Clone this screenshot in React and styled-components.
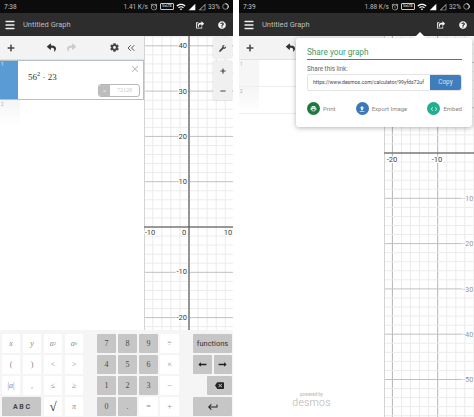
import React from "react";
import styled, { createGlobalStyle } from "styled-components";
import {
  FaWrench,
  FaCog,
  FaShareSquare,
  FaQuestionCircle,
  FaPlus,
  FaMinus,
  FaReply,
  FaLongArrowAltLeft,
  FaLongArrowAltRight,
} from "react-icons/fa";
import {
  MdBackspace,
  MdKeyboardReturn,
  MdPrint,
  MdFileUpload,
  MdCode,
  MdWifi,
  MdSignalCellular4Bar,
  MdSignalCellularNull,
  MdAccessAlarm,
} from "react-icons/md";
import { ChevronsLeft, X, Menu } from "lucide-react";

const GlobalStyle = createGlobalStyle`
  html, body {
    margin: 0;
    padding: 0;
    background: #fff;
  }
  body {
    font-family: Roboto, "Liberation Sans", sans-serif;
  }
`;

const MAJOR = 45.3;
const MINOR = MAJOR / 5;

const range = (start, end, step) => {
  const out = [];
  for (let v = start; v <= end; v += step) out.push(v);
  return out;
};

const Graph = ({ width, height, ox, oy, xLabels, yLabels, children }) => {
  const vert = range(-30, 30, 1).map((i) => ({ i, p: ox + i * MINOR })).filter((l) => l.p >= 0 && l.p <= width);
  const horiz = range(-30, 30, 1).map((i) => ({ i, p: oy + i * MINOR })).filter((l) => l.p >= 0 && l.p <= height);
  return (
    <GraphArea $width={width}>
      <svg width={width} height={height} style={{ display: "block" }}>
        {vert.map(({ i, p }) => (
          <line key={i} x1={p} x2={p} y1={0} y2={height} stroke={i % 5 === 0 ? "#b4b4b4" : "#ebebeb"} strokeWidth="1" />
        ))}
        {horiz.map(({ i, p }) => (
          <line key={i} x1={0} x2={width} y1={p} y2={p} stroke={i % 5 === 0 ? "#c0c0c0" : "#ebebeb"} strokeWidth="1" />
        ))}
        <line x1={0.5} x2={0.5} y1={0} y2={height} stroke="#d4d4d4" strokeWidth="1" />
        <line x1={0} x2={width} y1={oy} y2={oy} stroke="#555" strokeWidth="1.2" />
        {ox <= width && <line x1={ox} x2={ox} y1={0} y2={height} stroke="#666" strokeWidth="1.2" />}
        {xLabels.map((l) => (
          <AxisLabel key={l.t} x={l.x} y={l.y} textAnchor="middle" $faint={l.faint}>
            {l.t}
          </AxisLabel>
        ))}
        {yLabels.map((l) => (
          <AxisLabel key={l.t} x={l.x} y={l.y} textAnchor={l.anchor || "end"} $faint={l.faint}>
            {l.t}
          </AxisLabel>
        ))}
      </svg>
      {children}
    </GraphArea>
  );
};

const BatteryRing = () => (
  <svg width="7" height="7" viewBox="0 0 10 10">
    <circle cx="5" cy="5" r="4" fill="none" stroke="#9a9a9a" strokeWidth="1.2" />
    <path d="M5 1a4 4 0 0 1 2.6 7" fill="none" stroke="#fff" strokeWidth="1.2" />
  </svg>
);

const StatusBar = ({ time, speed, battery }) => (
  <Status>
    <span>{time}</span>
    <StatusRight>
      <span>{speed}</span>
      <MdAccessAlarm size={8} />
      <Volte>VoLTE</Volte>
      <MdWifi size={10} color="#fff" />
      <MdSignalCellular4Bar size={8} color="#fff" />
      <MdSignalCellularNull size={8} />
      <span>{battery}</span>
      <BatteryRing />
    </StatusRight>
  </Status>
);

const TopBar = () => (
  <Header>
    <HeaderLeft>
      <Menu size={12} strokeWidth={2.6} color="#f0f0f0" />
      <HeaderTitle>Untitled Graph</HeaderTitle>
    </HeaderLeft>
    <HeaderRight>
      <FaShareSquare size={8} />
      <FaQuestionCircle size={8} />
    </HeaderRight>
  </Header>
);

const Key = ({ dark, span, children }) => (
  <KeyCap $dark={dark} $span={span}>
    {children}
  </KeyCap>
);

const LEFT_X = [
  { t: "-10", x: 6, y: 199 },
  { t: "0", x: 40, y: 199 },
  { t: "10", x: 84, y: 199 },
];
const LEFT_Y = [
  { t: "40", x: 43, y: 12 },
  { t: "30", x: 43, y: 58 },
  { t: "20", x: 43, y: 103 },
  { t: "10", x: 43, y: 148 },
  { t: "-10", x: 43, y: 238 },
  { t: "-20", x: 43, y: 284 },
];
const RIGHT_X = [
  { t: "-20", x: 8, y: 126 },
  { t: "-10", x: 53, y: 126 },
];
const RIGHT_Y = [
  { t: "-10", x: 79, y: 165, anchor: "start", faint: true },
  { t: "-20", x: 79, y: 210, anchor: "start", faint: true },
  { t: "-30", x: 79, y: 256, anchor: "start", faint: true },
  { t: "-40", x: 79, y: 301, anchor: "start", faint: true },
  { t: "-50", x: 79, y: 346, anchor: "start", faint: true },
];

export default function App() {
  return (
    <Page>
      <GlobalStyle />
      <Phone $width={233}>
        <StatusBar time="7:38" speed="1.41 K/s" battery="33%" />
        <TopBar />
        <Body>
          <Panel>
            <Toolbar>
              <FaPlus size={8} color="#444" />
              <UndoGroup>
                <FaReply size={9} color="#333" />
                <RedoIcon size={9} color="#ccc" />
              </UndoGroup>
              <ToolbarEnd>
                <FaCog size={9} color="#444" />
                <ChevronsLeft size={12} color="#555" />
              </ToolbarEnd>
            </Toolbar>
            <ActiveRow>
              <RowTab>1</RowTab>
              <Formula>
                56<sup>2</sup> · 23
              </Formula>
              <CloseBtn>
                <X size={10} color="#bbb" strokeWidth={2.5} />
              </CloseBtn>
              <Answer>
                <AnswerEq>=</AnswerEq>
                <AnswerVal>72128</AnswerVal>
              </Answer>
            </ActiveRow>
            <EmptyRow>
              <Gutter $fade>
                <RowNum>2</RowNum>
              </Gutter>
            </EmptyRow>
          </Panel>
          <Graph width={89} height={294} ox={45} oy={191} xLabels={LEFT_X} yLabels={LEFT_Y}>
            <ToolStack>
              <ToolBox>
                <ToolCell $height={20}>
                  <FaWrench size={7} color="#444" />
                </ToolCell>
              </ToolBox>
              <ToolBox>
                <ToolCell $height={20}>
                  <FaPlus size={6} color="#444" />
                </ToolCell>
                <ToolCell $height={19}>
                  <FaMinus size={6} color="#444" />
                </ToolCell>
              </ToolBox>
            </ToolStack>
          </Graph>
        </Body>
        <Keypad>
          <KeyGroup $cols="repeat(4, 18px)" $gap={3}>
            <Key><i>x</i></Key>
            <Key><i>y</i></Key>
            <Key><i>a</i><sup>2</sup></Key>
            <Key><i>a</i><sup><i>b</i></sup></Key>
            <Key>(</Key>
            <Key>)</Key>
            <Key>&lt;</Key>
            <Key>&gt;</Key>
            <Key>|<i>a</i>|</Key>
            <Key>,</Key>
            <Key>≤</Key>
            <Key>≥</Key>
            <Key dark span={2}><AbcLabel>A B C</AbcLabel></Key>
            <Key><SqrtLabel>√</SqrtLabel></Key>
            <Key><i>π</i></Key>
          </KeyGroup>
          <KeyGroup $cols="repeat(4, 19px)" $gap={2}>
            <Key dark>7</Key>
            <Key dark>8</Key>
            <Key dark>9</Key>
            <Key>÷</Key>
            <Key dark>4</Key>
            <Key dark>5</Key>
            <Key dark>6</Key>
            <Key>×</Key>
            <Key dark>1</Key>
            <Key dark>2</Key>
            <Key dark>3</Key>
            <Key>−</Key>
            <Key dark>0</Key>
            <Key dark>.</Key>
            <Key>=</Key>
            <Key>+</Key>
          </KeyGroup>
          <KeyGroup $cols="repeat(6, 1fr)" $gap={2} $width={40}>
            <Key dark span={6}><FuncLabel>functions</FuncLabel></Key>
            <Key dark span={3}><FaLongArrowAltLeft size={9} color="#222" /></Key>
            <Key dark span={3}><FaLongArrowAltRight size={9} color="#222" /></Key>
            <KeySpacer />
            <Key dark span={4}><MdBackspace size={9} color="#222" /></Key>
            <Key dark span={6}><MdKeyboardReturn size={12} color="#222" /></Key>
          </KeyGroup>
        </Keypad>
      </Phone>
      <Phone $width={235}>
        <StatusBar time="7:39" speed="1.88 K/s" battery="32%" />
        <TopBar />
        <Body>
          <Panel>
            <Toolbar>
              <FaPlus size={8} color="#444" />
              <UndoGroup>
                <FaReply size={9} color="#333" />
              </UndoGroup>
            </Toolbar>
            <PlainRow $height={27}>
              <Gutter>
                <RowNum>1</RowNum>
              </Gutter>
            </PlainRow>
            <PlainRow $height={27}>
              <Gutter $fade>
                <RowNum>2</RowNum>
              </Gutter>
            </PlainRow>
            <Powered>
              <small>powered by</small>
              <span>desmos</span>
            </Powered>
          </Panel>
          <Graph width={90} height={381} ox={99} oy={117} xLabels={RIGHT_X} yLabels={RIGHT_Y} />
          <SharePopup>
            <PopupTitle>Share your graph</PopupTitle>
            <LinkLabel>Share this link:</LinkLabel>
            <LinkRow>
              <LinkText>https://www.desmos.com/calculator/99yfds72uf</LinkText>
              <CopyBtn>Copy</CopyBtn>
            </LinkRow>
            <ActionRow>
              <Action>
                <ActionDot $color="#1c7a3e"><MdPrint size={7} /></ActionDot>
                Print
              </Action>
              <Action>
                <ActionDot $color="#3b78b8"><MdFileUpload size={8} /></ActionDot>
                Export Image
              </Action>
              <Action>
                <ActionDot $color="#1fae8e"><MdCode size={8} /></ActionDot>
                Embed
              </Action>
            </ActionRow>
          </SharePopup>
        </Body>
      </Phone>
    </Page>
  );
}

const Page = styled.div`
  width: 474px;
  height: 417px;
  display: flex;
  gap: 6px;
  overflow: hidden;
  background: #fff;
`;

const Phone = styled.div`
  width: ${({ $width }) => $width}px;
  height: 417px;
  display: flex;
  flex-direction: column;
  flex: none;
`;

const Status = styled.div`
  height: 13px;
  flex: none;
  background: #0c0c0c;
  color: #c4c4c4;
  font-size: 6.5px;
  display: flex;
  align-items: center;
  justify-content: space-between;
  padding: 0 4px;
`;

const StatusRight = styled.div`
  display: flex;
  align-items: center;
  gap: 2px;
  color: #bdbdbd;
`;

const Volte = styled.span`
  border: 1px solid #ccc;
  border-radius: 1px;
  font-size: 3.5px;
  font-weight: 700;
  padding: 0 1px;
  line-height: 5px;
  width: 10px;
  text-align: center;
`;

const Header = styled.div`
  height: 23px;
  flex: none;
  background: #2d2d2d;
  color: #f2f2f2;
  display: flex;
  align-items: center;
  justify-content: space-between;
  padding: 0 7px 0 4px;
`;

const HeaderLeft = styled.div`
  display: flex;
  align-items: center;
  gap: 7px;
`;

const HeaderTitle = styled.span`
  font-size: 7.5px;
  color: #bdbdbd;
`;

const HeaderRight = styled.div`
  display: flex;
  align-items: center;
  gap: 14px;
`;

const Body = styled.div`
  flex: 1;
  min-height: 0;
  display: flex;
  position: relative;
`;

const Panel = styled.div`
  flex: 1;
  min-width: 0;
  display: flex;
  flex-direction: column;
  background: #fff;
`;

const Toolbar = styled.div`
  height: 24px;
  flex: none;
  background: #f3f3f3;
  border-bottom: 1px solid #e2e2e2;
  box-sizing: border-box;
  display: flex;
  align-items: center;
  padding: 0 7px;
`;

const UndoGroup = styled.div`
  display: flex;
  align-items: center;
  gap: 11px;
  margin-left: 32px;
`;

const RedoIcon = styled(FaReply)`
  transform: scaleX(-1);
`;

const ToolbarEnd = styled.div`
  display: flex;
  align-items: center;
  gap: 6px;
  margin-left: auto;
`;

const ActiveRow = styled.div`
  height: 40px;
  flex: none;
  box-sizing: border-box;
  border: 1px solid #b4c1cb;
  border-left: none;
  display: flex;
  position: relative;
  background: #fff;
`;

const RowTab = styled.div`
  width: 18px;
  background: #5a9bd5;
  color: #e6f0fa;
  font-size: 4.5px;
  padding: 1px 0 0 1px;
  box-sizing: border-box;
`;

const Formula = styled.div`
  font-family: "Liberation Serif", serif;
  font-size: 9px;
  color: #333;
  padding: 11px 0 0 10px;

  sup {
    font-size: 6.5px;
    line-height: 0;
  }
`;

const CloseBtn = styled.div`
  position: absolute;
  top: 3px;
  right: 3px;
  display: flex;
`;

const Answer = styled.div`
  position: absolute;
  right: 3px;
  bottom: 2px;
  width: 42px;
  height: 13px;
  box-sizing: border-box;
  border: 1px solid #b8b8b8;
  border-radius: 3px;
  display: flex;
  overflow: hidden;
  font-size: 6px;
`;

const AnswerEq = styled.div`
  width: 11px;
  background: #bdbdbd;
  color: #eee;
  text-align: center;
  line-height: 11px;
`;

const AnswerVal = styled.div`
  flex: 1;
  color: #ccc;
  text-align: center;
  line-height: 11px;
  font-family: "Liberation Serif", serif;
`;

const EmptyRow = styled.div`
  height: 26px;
  flex: none;
  display: flex;
`;

const PlainRow = styled.div`
  height: ${({ $height }) => $height}px;
  flex: none;
  box-sizing: border-box;
  border-bottom: 1px solid #eee;
  display: flex;
`;

const Gutter = styled.div`
  width: 20px;
  background: ${({ $fade }) => ($fade ? "linear-gradient(#f5f5f5, #fff)" : "#f6f6f6")};
`;

const RowNum = styled.div`
  font-size: 4.5px;
  color: #aaa;
  padding: 2px 0 0 1px;
`;

const Powered = styled.div`
  margin-top: auto;
  margin-bottom: 9px;
  display: flex;
  flex-direction: column;
  align-items: center;
  color: #b4b4b4;
  line-height: 1;

  small {
    font-size: 4.5px;
  }

  span {
    font-size: 10.5px;
    font-weight: 300;
    letter-spacing: 0.2px;
  }
`;

const GraphArea = styled.div`
  width: ${({ $width }) => $width}px;
  flex: none;
  position: relative;
  background: #fff;
  overflow: hidden;
`;

const AxisLabel = styled.text`
  font-size: 7.5px;
  fill: ${({ $faint }) => ($faint ? "#999" : "#3c3c3c")};
  stroke: #fff;
  stroke-width: 2px;
  paint-order: stroke;
`;

const ToolStack = styled.div`
  position: absolute;
  top: 2px;
  right: 1px;
  display: flex;
  flex-direction: column;
  gap: 3px;
`;

const ToolBox = styled.div`
  width: 19px;
  background: #f0f0f0;
  border-radius: 2px;
  box-shadow: 0 0 2px rgba(0, 0, 0, 0.2);
`;

const ToolCell = styled.div`
  height: ${({ $height }) => $height}px;
  display: flex;
  align-items: center;
  justify-content: center;
`;

const Keypad = styled.div`
  height: 87px;
  flex: none;
  box-sizing: border-box;
  background: #f5f5f5;
  padding: 4px 1px 2px 2px;
  display: flex;
  gap: 14px;
`;

const KeyGroup = styled.div`
  display: grid;
  grid-template-columns: ${({ $cols }) => $cols};
  grid-auto-rows: 19px;
  gap: 2px ${({ $gap }) => $gap}px;
  width: ${({ $width }) => ($width ? `${$width}px` : "auto")};
  margin-left: ${({ $width }) => ($width ? "auto" : "0")};
`;

const KeyCap = styled.div`
  grid-column: span ${({ $span }) => $span || 1};
  background: ${({ $dark }) => ($dark ? "#c6c6c6" : "#fff")};
  color: ${({ $dark }) => ($dark ? "#4a4a4a" : "#888")};
  font-family: "Liberation Serif", serif;
  font-size: 8px;
  display: flex;
  align-items: center;
  justify-content: center;
  border-radius: 1px;

  sup {
    font-size: 5px;
    line-height: 0;
  }
`;

const KeySpacer = styled.div`
  grid-column: span 2;
`;

const AbcLabel = styled.span`
  font-family: Roboto, sans-serif;
  font-size: 7px;
  font-weight: 700;
  color: #444;
`;

const SqrtLabel = styled.span`
  font-size: 13px;
  color: #222;
`;

const FuncLabel = styled.span`
  font-family: Roboto, sans-serif;
  font-size: 7.5px;
  color: #333;
`;

const SharePopup = styled.div`
  position: absolute;
  top: 2px;
  left: 57px;
  width: 176px;
  height: 89px;
  box-sizing: border-box;
  padding: 9px 10px 0 11px;
  background: #fff;
  border-radius: 3px;
  box-shadow: 0 1px 5px rgba(0, 0, 0, 0.3);

  &::before {
    content: "";
    position: absolute;
    top: -6px;
    left: 118px;
    border-left: 6px solid transparent;
    border-right: 6px solid transparent;
    border-bottom: 6px solid #fff;
  }
`;

const PopupTitle = styled.div`
  font-size: 8.2px;
  line-height: 11px;
  color: #3f9a6c;
  border-bottom: 1px solid #3f8a62;
  padding-bottom: 1px;
`;

const LinkLabel = styled.div`
  font-size: 6.3px;
  line-height: 7px;
  color: #666;
  margin-top: 6px;
`;

const LinkRow = styled.div`
  display: flex;
  height: 17px;
  margin-top: 1px;
  border: 1px solid #e4e4e4;
  border-radius: 2px;
  box-sizing: border-box;
`;

const LinkText = styled.div`
  flex: 1;
  min-width: 0;
  overflow: hidden;
  white-space: nowrap;
  font-size: 5.1px;
  line-height: 15px;
  padding-left: 5px;
  color: #444;
`;

const CopyBtn = styled.div`
  width: 31px;
  flex: none;
  background: #3f7dbd;
  color: #d4e2f0;
  font-size: 6.5px;
  text-align: center;
  line-height: 14px;
  border-radius: 0 2px 2px 0;
`;

const ActionRow = styled.div`
  display: flex;
  justify-content: space-between;
  margin-top: 11px;
`;

const Action = styled.div`
  display: flex;
  align-items: center;
  gap: 3px;
  font-size: 6px;
  color: #888;
`;

const ActionDot = styled.div`
  width: 13px;
  height: 13px;
  border-radius: 50%;
  background: ${({ $color }) => $color};
  color: #dfeee8;
  display: flex;
  align-items: center;
  justify-content: center;
`;
